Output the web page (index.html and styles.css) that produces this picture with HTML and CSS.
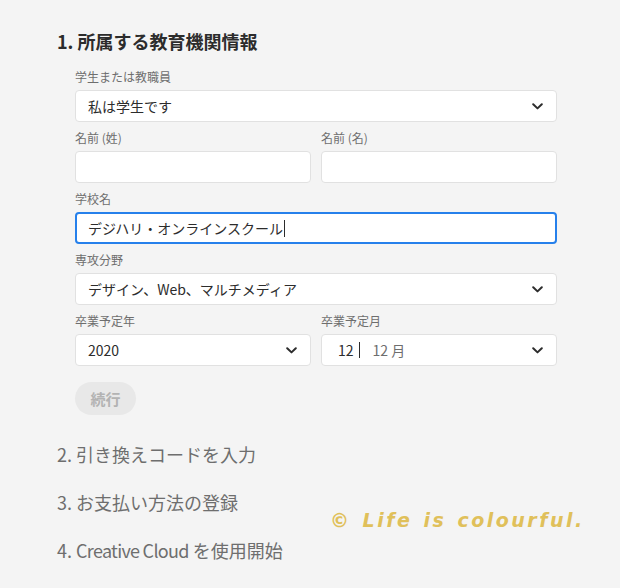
FILE: index.html
```html
<!DOCTYPE html>
<html lang="ja">
<head>
<meta charset="utf-8">
<title>教育機関情報</title>
<link rel="stylesheet" href="styles.css">
</head>
<body>
<main class="page">
  <section class="step step-active">
    <h2 class="step-title">1. 所属する教育機関情報</h2>
    <form class="form">
      <div class="field">
        <div class="label">学生または教職員</div>
        <div class="box select"><span class="val">私は学生です</span><span class="chev"><svg width="11" height="7" viewBox="0 0 11 7"><path d="M1.2 1.2 L5.5 5.4 L9.8 1.2" fill="none" stroke="#2c2c2c" stroke-width="2" stroke-linecap="round" stroke-linejoin="round"/></svg></span></div>
      </div>
      <div class="row">
        <div class="field">
          <div class="label">名前 (姓)</div>
          <div class="box"></div>
        </div>
        <div class="field">
          <div class="label">名前 (名)</div>
          <div class="box"></div>
        </div>
      </div>
      <div class="field">
        <div class="label">学校名</div>
        <div class="box focus"><span class="val">デジハリ・オンラインスクール</span><span class="caret"></span></div>
      </div>
      <div class="field">
        <div class="label">専攻分野</div>
        <div class="box select"><span class="val">デザイン、Web、マルチメディア</span><span class="chev"><svg width="11" height="7" viewBox="0 0 11 7"><path d="M1.2 1.2 L5.5 5.4 L9.8 1.2" fill="none" stroke="#2c2c2c" stroke-width="2" stroke-linecap="round" stroke-linejoin="round"/></svg></span></div>
      </div>
      <div class="row">
        <div class="field">
          <div class="label">卒業予定年</div>
          <div class="box select"><span class="val">2020</span><span class="chev"><svg width="11" height="7" viewBox="0 0 11 7"><path d="M1.2 1.2 L5.5 5.4 L9.8 1.2" fill="none" stroke="#2c2c2c" stroke-width="2" stroke-linecap="round" stroke-linejoin="round"/></svg></span></div>
        </div>
        <div class="field">
          <div class="label">卒業予定月</div>
          <div class="box select month"><span class="val num">12</span><span class="bar"></span><span class="val sub">12 月</span><span class="chev"><svg width="11" height="7" viewBox="0 0 11 7"><path d="M1.2 1.2 L5.5 5.4 L9.8 1.2" fill="none" stroke="#2c2c2c" stroke-width="2" stroke-linecap="round" stroke-linejoin="round"/></svg></span></div>
        </div>
      </div>
      <button class="btn" type="button">続行</button>
    </form>
  </section>
  <div class="step"><h2 class="step-next">2. 引き換えコードを入力</h2></div>
  <div class="step"><h2 class="step-next">3. お支払い方法の登録</h2></div>
  <div class="step"><h2 class="step-next">4. <span class="latin">Creative Cloud</span> を使用開始</h2></div>
  <div class="watermark">© Life is colourful.</div>
</main>
</body>
</html>
```
FILE: styles.css
```css
* { box-sizing: border-box; }
html, body { margin: 0; padding: 0; }
body {
  background: #f4f4f4;
  font-family: "Noto Sans CJK JP", "Noto Sans", sans-serif;
  color: #2c2c2c;
  width: 620px;
  height: 588px;
  overflow: hidden;
}
.page {
  position: relative;
  padding: 29px 0 0 57px;
  height: 588px;
}
.step-title {
  margin: 0;
  font-size: 18px;
  line-height: 24px;
  font-weight: 700;
  color: #2c2c2c;
}
.form {
  margin: 15px 0 0 18px;
  width: 482px;
  display: flex;
  flex-direction: column;
}
.row {
  display: grid;
  grid-template-columns: 236px 236px;
  column-gap: 10px;
}
.field {
  display: flex;
  flex-direction: column;
  margin-bottom: 7px;
}
.label {
  font-size: 12px;
  line-height: 18px;
  color: #6e6e6e;
  margin-bottom: 4px;
}
.box {
  height: 32px;
  background: #fff;
  border: 1px solid #e1e1e1;
  border-radius: 4px;
  display: flex;
  align-items: center;
  padding: 0 13px 0 12px;
  font-size: 14px;
  color: #2c2c2c;
}
.box.focus {
  border: 2px solid #2680eb;
  padding-left: 11px;
}
.val { line-height: 20px; white-space: nowrap; }
.caret {
  width: 1px;
  height: 17px;
  background: #2c2c2c;
  margin-left: 1px;
}
.select .chev {
  margin-left: auto;
  display: flex;
  align-items: center;
}
.month .num { margin-left: 4px; }
.month .bar {
  width: 1px;
  height: 16px;
  background: #2c2c2c;
  margin: 0 13px 0 5px;
}
.month .sub { color: #6e6e6e; }
.btn {
  margin-top: 9px;
  width: 61px;
  height: 33px;
  border: none;
  border-radius: 17px;
  background: #e8e8e8;
  color: #b3b3b3;
  font-family: inherit;
  font-size: 15px;
  font-weight: 700;
  padding: 0;
}
.step-next {
  margin: 0;
  font-size: 18px;
  line-height: 24px;
  font-weight: 400;
  color: #6e6e6e;
}
.step-next .latin { letter-spacing: -0.7px; }
.step-active { margin-bottom: 27px; }
.step + .step { margin-top: 24px; }
.step-active + .step { margin-top: 0; }
.watermark {
  position: absolute;
  left: 330px;
  top: 508px;
  font-family: "DejaVu Sans", sans-serif;
  font-weight: 700;
  font-style: italic;
  font-size: 19px;
  letter-spacing: 2.5px;
  word-spacing: 2px;
  color: #e0c05a;
  line-height: 24px;
  white-space: nowrap;
}
```
